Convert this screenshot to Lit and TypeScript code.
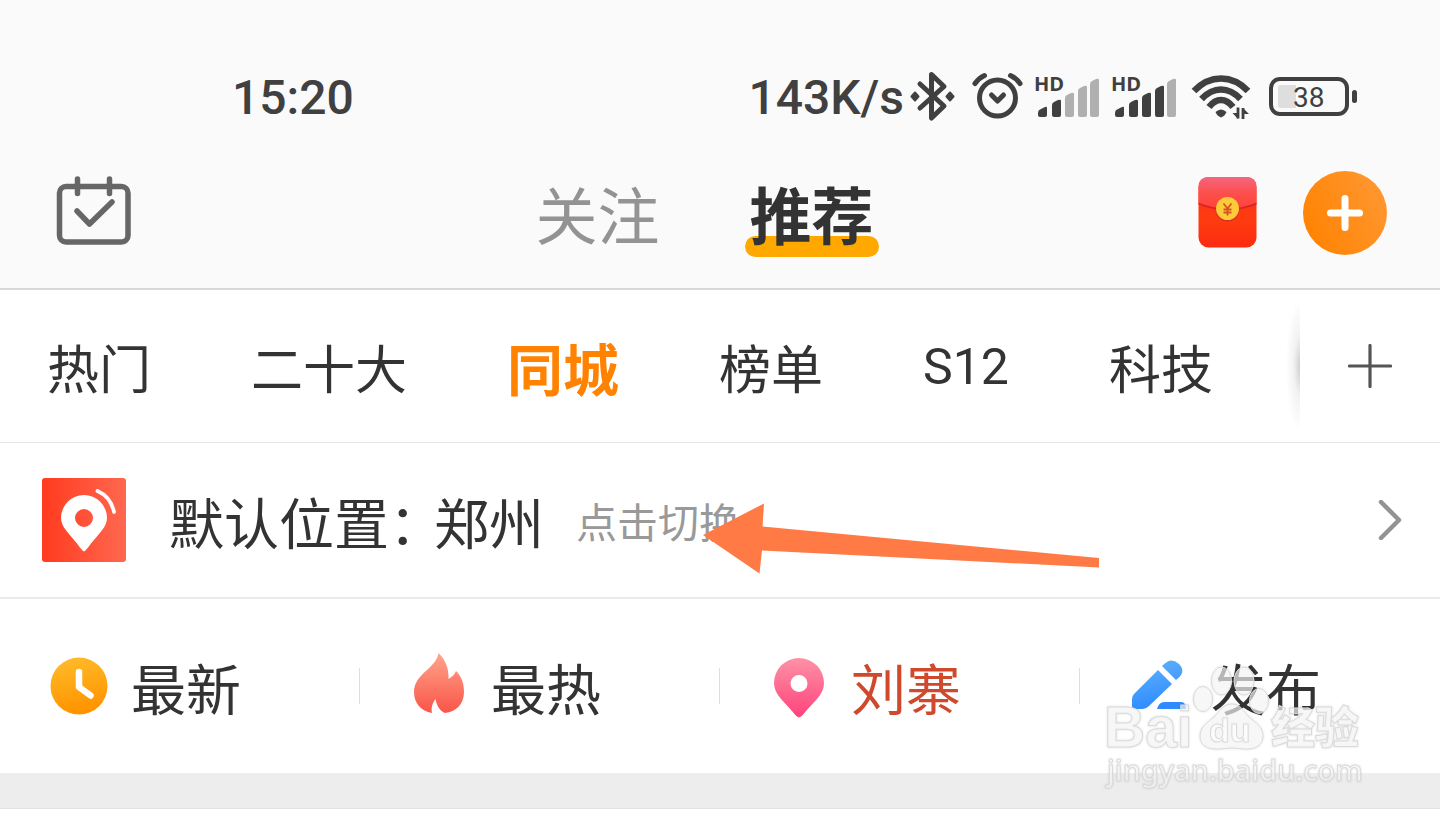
import { LitElement, html, svg, css } from "lit";
import { customElement, property, state } from "lit/decorators.js";
import { classMap } from "lit/directives/class-map.js";

const FULL = "#404040";
const EMPTY = "#b0b0b0";

@customElement("signal-bars")
class SignalBars extends LitElement {
  @property({ type: Number }) level = 0;

  static styles = css`
    :host { display: block; }
    svg { display: block; }
    text { font: 700 20px "Open Sans", sans-serif; fill: #404040; }
  `;

  render() {
    const bars = [
      "M9 43q0-3 3-4l4-2q2-1 2 1v7q0 2-2 2h-5q-2 0-2-2z",
      "M23 35q0-2 2-3l4-2q3-1 3 1v14q0 2-2 2h-5q-2 0-2-2z",
      "M36 28q0-2 2-3l4-2q3-1 3 1v21q0 2-2 2h-5q-2 0-2-2z",
      "M49 21q0-2 2-3l4-2q3-1 3 1v28q0 2-2 2h-5q-2 0-2-2z",
      "M61 14q0-2 2-3l4-2q3-1 3 1v35q0 2-2 2h-5q-2 0-2-2z",
    ];
    return html`<svg width="77" height="56" viewBox="0 0 77 56">
      ${bars.map((d, i) => svg`<path d=${d} fill=${i < this.level ? FULL : EMPTY} />`)}
      <text x="5" y="21">HD</text>
    </svg>`;
  }
}

@customElement("status-bar")
class StatusBar extends LitElement {
  static styles = css`
    :host {
      display: flex;
      align-items: center;
      justify-content: space-between;
      padding: 70px 81px 0 232px;
      font: 500 48px/56px Roboto, "Open Sans", sans-serif;
      color: #404040;
    }
    .group { display: flex; align-items: center; }
    svg { display: block; }
    .level { font: 400 28px Roboto, "Open Sans", sans-serif; fill: #404040; }
  `;

  render() {
    return html`
      <time>15:20</time>
      <div class="group">
        <span>143K/s</span>
        <svg width="60" height="56" viewBox="904 70 60 56" fill="none" stroke=${FULL} stroke-width="5" stroke-linecap="round" stroke-linejoin="round">
          <path d="M920 84l24 22-12.500 12V74.500l12.500 12L920 108" />
          <path d="M915 92.500l3.500 4-3.500 4-3.500-4zM950 92.500l3.500 4-3.500 4-3.500-4z" fill=${FULL} stroke-width="2" />
        </svg>
        <svg width="65" height="56" viewBox="964 70 65 56" fill="none" stroke=${FULL} stroke-linecap="round" stroke-linejoin="round">
          <circle cx="997.500" cy="98" r="18" stroke-width="5" />
          <path d="M991.500 95l6 6 6-6" stroke-width="5" />
          <path d="M975 83.500q4-5.500 9.500-8M1020 83.500q-4-5.500-9.500-8" stroke-width="5" />
        </svg>
        <signal-bars level="2"></signal-bars>
        <signal-bars level="4"></signal-bars>
        <svg width="76" height="56" viewBox="1183 70 76 56" fill="none" stroke=${FULL} stroke-width="6.500">
          <path d="M1194 91q12-12.500 27-12.500t27 12.500" />
          <path d="M1201.500 99q9-9.500 19.500-9.500t19.500 9.500" />
          <path d="M1209 107q5.500-7 12-7t12 7" />
          <path d="M1215.500 112q5.500-5 11 0-1.500 4-5.500 5.500-4-1.500-5.500-5.500z" fill=${FULL} stroke="none" />
          <path d="M1238 107.500v11M1243 119v-11" stroke-width="2.800" />
          <path d="M1238 119v-6h-5.500zM1243 108v6h6z" fill=${FULL} stroke="none" />
        </svg>
        <svg width="100" height="56" viewBox="1259 70 100 56">
          <path d="M1281 85h15v23h-15q-3 0-3-3V88q0-3 3-3z" fill="#dedede" />
          <rect x="1271" y="79" width="76" height="35" rx="9" fill="none" stroke=${FULL} stroke-width="4" />
          <rect x="1352" y="90" width="5" height="13" rx="2.500" fill=${FULL} />
          <text class="level" x="1293" y="107">38</text>
        </svg>
      </div>
    `;
  }
}

@customElement("top-nav")
class TopNav extends LitElement {
  @state() private active = "推荐";

  static styles = css`
    :host {
      display: grid;
      grid-template-columns: 1fr auto 1fr;
      align-items: center;
      padding: 43px 53px 31px 56px;
    }
    button { border: 0; padding: 0; background: none; cursor: pointer; display: block; }
    svg { display: block; }
    .tabs { display: flex; gap: 80px; padding-right: 34px; }
    .tab {
      position: relative;
      isolation: isolate;
      padding: 0 5px;
      font: 400 62px/88px "Noto Sans CJK SC", sans-serif;
      color: #939393;
    }
    .active { color: #333; font-weight: 700; }
    .active::after {
      content: "";
      position: absolute;
      inset: auto 0 0;
      height: 21px;
      border-radius: 11px;
      background: #ffa800;
      z-index: -1;
    }
    .actions { display: flex; justify-content: flex-end; align-items: center; gap: 46px; }
  `;

  render() {
    return html`
      <button aria-label="签到">
        <svg width="76" height="84" viewBox="56 171 76 84" fill="none" stroke="#666" stroke-width="5.500" stroke-linecap="round" stroke-linejoin="round">
          <rect x="59.500" y="186.500" width="68.500" height="55.500" rx="6.500" />
          <path d="M77.500 179v14.500M109.500 179v14.500M77 211l12.500 13L112 202" />
        </svg>
      </button>
      <div class="tabs">
        ${["关注", "推荐"].map(
          (t) => html`<button class=${classMap({ tab: true, active: t === this.active })} @click=${() => (this.active = t)}>${t}</button>`
        )}
      </div>
      <div class="actions">
        <button aria-label="红包">
          <svg width="59" height="84" viewBox="1198 171 59 84">
            <defs>
              <linearGradient id="flap" x2="0" y2="1"><stop stop-color="#f4657f" /><stop offset=".5" stop-color="#fd4f4c" /><stop offset="1" stop-color="#ff4238" /></linearGradient>
              <linearGradient id="body" x2="0" y2="1"><stop stop-color="#f52a20" /><stop offset=".6" stop-color="#ff3c10" /><stop offset="1" stop-color="#fb2c10" /></linearGradient>
            </defs>
            <rect x="1198.500" y="177" width="58" height="70.500" rx="10" fill="url(#body)" />
            <path d="M1198.500 203.500V187q0-10 10-10h38q10 0 10 10v16.500q-29 12-58 0z" fill="url(#flap)" />
            <path d="M1198.500 203.500q29 12 58 0" fill="none" stroke="#d92222" stroke-width="1.500" />
            <circle cx="1227.500" cy="209.500" r="12" fill="#d9301a" />
            <circle cx="1227.500" cy="208.500" r="11.500" fill="#ffc93c" />
            <path d="M1223.500 203.500l4 5 4-5M1227.500 208.500v7M1223.500 209.500h8M1223.500 212.500h8" fill="none" stroke="#d0571c" stroke-width="1.800" />
          </svg>
        </button>
        <button aria-label="发布新内容">
          <svg width="84" height="84" viewBox="0 0 84 84">
            <defs><linearGradient id="plus" x1="0" y1=".8" x2="1" y2=".3"><stop stop-color="#ff8200" /><stop offset="1" stop-color="#ff9730" /></linearGradient></defs>
            <circle cx="42" cy="42" r="42" fill="url(#plus)" />
            <path d="M42 27.500v29M27.500 42h29" stroke="#fff" stroke-width="7" stroke-linecap="round" />
          </svg>
        </button>
      </div>
    `;
  }
}

@customElement("channel-tabs")
class ChannelTabs extends LitElement {
  @state() private active = "同城";

  static styles = css`
    :host { display: flex; align-items: stretch; border-bottom: 1px solid #e4e4e4; }
    .list { flex: 1; display: flex; align-items: center; gap: 100px; padding: 2px 0 0 47px; overflow: hidden; }
    button { border: 0; padding: 0; background: none; cursor: pointer; }
    .channel {
      flex: none;
      font: 400 52px/150px "Noto Sans CJK SC", sans-serif;
      color: #333;
    }
    .latin { font-family: Roboto, sans-serif; font-size: 50px; }
    .active { font-weight: 700; font-size: 56px; color: #ff8200; }
    .edge {
      width: 14px;
      background: radial-gradient(ellipse 14px 66px at 100% 50%, #cfcfcf, #f2f2f2 45%, #fff);
    }
    .more { width: 140px; display: grid; place-items: center; }
    svg { display: block; }
  `;

  render() {
    return html`
      <div class="list">
        ${["热门", "二十大", "同城", "榜单", "S12", "科技"].map(
          (c) =>
            html`<button
              class=${classMap({ channel: true, active: c === this.active, latin: /^\w+$/.test(c) })}
              @click=${() => (this.active = c)}
            >${c}</button>`
        )}
      </div>
      <div class="edge"></div>
      <button class="more" aria-label="更多频道">
        <svg width="44" height="44" viewBox="0 0 44 44" stroke="#555" stroke-width="3.200" stroke-linecap="round"><path d="M22 1.500v41M1.500 22h41" /></svg>
      </button>
    `;
  }
}

@customElement("location-row")
class LocationRow extends LitElement {
  static styles = css`
    :host { display: block; position: relative; border-bottom: 2px solid #ebebeb; }
    .row {
      display: flex;
      align-items: center;
      padding: 0 38px 0 42px;
      font: 400 55px/154px "Noto Sans CJK SC", sans-serif;
      color: #333;
      text-decoration: none;
    }
    svg { display: block; flex: none; }
    .label { margin: 0 -10px 0 43px; }
    .hint { margin-left: 32px; font-size: 41px; color: #999; }
    .chevron { margin-left: auto; }
    .pointer { position: absolute; left: 703px; top: 60px; }
  `;

  render() {
    return html`
      <a class="row" href="#location">
        <svg width="84" height="84" viewBox="42 478 84 84">
          <defs><linearGradient id="tile"><stop stop-color="#ff3b1f" /><stop offset="1" stop-color="#ff6850" /></linearGradient></defs>
          <rect x="42" y="478" width="84" height="84" rx="3" fill="url(#tile)" />
          <path fill-rule="evenodd" fill="#fff" d="M84 551.500q-2-1-7-8-6-7-10-12-6-7-6-13.500a23 23 0 0 1 46 0q0 6.500-6 13.500-4 5-10 12-5 7-7 8zM84 509a9 9 0 1 0 0 18 9 9 0 0 0 0-18z" />
          <path d="M97.500 491q13.500 6 16.500 21" fill="none" stroke="#fff" stroke-width="3.800" stroke-linecap="round" />
        </svg>
        <span class="label">默认位置：</span><span>郑州</span>
        <span class="hint">点击切换</span>
        <svg class="chevron" width="24" height="40" viewBox="0 0 24 40" fill="none" stroke="#939393" stroke-width="4.500" stroke-linecap="round" stroke-linejoin="round"><path d="M3 2l18 18L3 38" /></svg>
      </a>
      <svg class="pointer" width="397" height="71" viewBox="703 503 397 71" fill="#ff7a45"><path d="M703 535l61-31.500-1.500 23L1099 558v9.500L762 550.500l-2.500 23z" /></svg>
    `;
  }
}

@customElement("quick-filters")
class QuickFilters extends LitElement {
  static styles = css`
    :host { display: grid; grid-template-columns: repeat(4, 1fr); }
    .item {
      display: flex;
      align-items: center;
      gap: 23px;
      padding: 0 0 0 50px;
      border: 0;
      background: no-repeat right center / 1px 36px linear-gradient(#dedede, #dedede);
      font: 400 55px/174px "Noto Sans CJK SC", sans-serif;
      color: #333;
      cursor: pointer;
    }
    .item:last-child { background: none; }
    .place { color: #cf4a2c; }
    svg { display: block; flex: none; }
  `;

  render() {
    return html`
      <button class="item">
        <svg width="58" height="68" viewBox="0 0 58 68">
          <defs><linearGradient id="clock" x2=".2" y2="1"><stop stop-color="#ffbd2c" /><stop offset="1" stop-color="#ff9400" /></linearGradient></defs>
          <circle cx="29" cy="34" r="28.500" fill="url(#clock)" />
          <path d="M29 20v15l11.500 8.500" fill="none" stroke="#fff" stroke-width="6.500" stroke-linecap="round" stroke-linejoin="round" />
        </svg>
        最新
      </button>
      <button class="item">
        <svg width="58" height="68" viewBox="0 0 58 68">
          <defs><linearGradient id="fire" x2="0" y2="1"><stop stop-color="#ffa58c" /><stop offset="1" stop-color="#fa5548" /></linearGradient></defs>
          <path d="M28.500 1C27 9 23 12 17 18 9 25 4 31 4 40c0 11 7 19 18 21-1-5 0-9 3.500-14 1 6 4 12 9.500 14 11-1 19-9 19-21 0-8-2-15-8-21-1 3-4 6-7.500 8C39 16 35 7 28.500 1z" fill="url(#fire)" />
        </svg>
        最热
      </button>
      <button class="item place">
        <svg width="58" height="68" viewBox="0 0 58 68">
          <defs><linearGradient id="pin" x2="0" y2="1"><stop stop-color="#fd92a6" /><stop offset="1" stop-color="#ff427c" /></linearGradient></defs>
          <path fill-rule="evenodd" d="M29 65.500q-2 0-7-6.500-5-5.500-11-12-7-8-7-16a25 25 0 0 1 50 0q0 8-7 16-6 6.500-11 12-5 6.500-7 6.500zM29 23a8.500 8.500 0 1 0 0 17 8.500 8.500 0 0 0 0-17z" fill="url(#pin)" />
        </svg>
        刘寨
      </button>
      <button class="item">
        <svg width="58" height="68" viewBox="0 0 58 68">
          <defs><linearGradient id="pen" x2=".3" y2="1"><stop stop-color="#63b4fb" /><stop offset="1" stop-color="#2f8cff" /></linearGradient></defs>
          <path d="M28 18L42 32 19 54q-3 3-6 3H5q-3 0-3-3v-7q0-3 2-5zM32 14q9-10 17-2t-3 16zM27 57q2-7 7-7h17q5 0 5 7z" fill="url(#pen)" />
        </svg>
        发布
      </button>
    `;
  }
}

@customElement("site-watermark")
class SiteWatermark extends LitElement {
  static styles = css`
    :host { display: block; pointer-events: none; filter: drop-shadow(0 0 1px rgba(0, 0, 0, 0.15)); }
    svg { display: block; }
    g { fill: #fff; fill-opacity: 0.65; stroke: #dadada; stroke-width: 1; }
    .name { font: 700 57px "Liberation Sans", sans-serif; }
    .inner { font: 700 34px "Liberation Sans", sans-serif; }
    .cjk { font: 900 44px "Noto Sans CJK SC", sans-serif; }
    .site { font: 500 29px "Noto Sans", sans-serif; }
  `;

  render() {
    return html`<svg width="270" height="136" viewBox="1100 660 270 136">
      <g>
        <text class="name" x="1104" y="747">Bai</text>
        <ellipse cx="1203" cy="699" rx="9.500" ry="12.500" />
        <ellipse cx="1221.500" cy="681" rx="10" ry="14" />
        <ellipse cx="1244" cy="681" rx="10" ry="14" />
        <ellipse cx="1259" cy="701" rx="9.500" ry="12.500" />
        <path d="M1232 704c9 0 11 7 17 13 7 6 14 10 14 19 0 10-8 13-16 13-6 0-9-1-15-1s-9 1-15 1c-9 0-17-3-17-13 0-9 7-13 14-19 6-6 9-13 18-13z" />
        <text class="inner" x="1209" y="742">du</text>
        <text class="cjk" x="1271" y="744">经验</text>
        <text class="site" x="1107" y="781">jingyan.baidu.com</text>
      </g>
    </svg>`;
  }
}

@customElement("app-root")
class AppRoot extends LitElement {
  static styles = css`
    :host { display: block; position: relative; background: #fff; min-height: 100vh; overflow: hidden; }
    header { background: #fafafa; border-bottom: 2px solid #d8d8d8; }
    .band { height: 35px; background: #ededed; border-bottom: 1px solid #e2e2e2; }
    .filters { position: relative; }
    .mark { position: absolute; right: 70px; top: 61px; z-index: 1; }
  `;

  render() {
    return html`
      <header>
        <status-bar></status-bar>
        <top-nav></top-nav>
      </header>
      <channel-tabs></channel-tabs>
      <location-row></location-row>
      <div class="filters">
        <quick-filters></quick-filters>
        <site-watermark class="mark"></site-watermark>
      </div>
      <div class="band"></div>
    `;
  }
}
